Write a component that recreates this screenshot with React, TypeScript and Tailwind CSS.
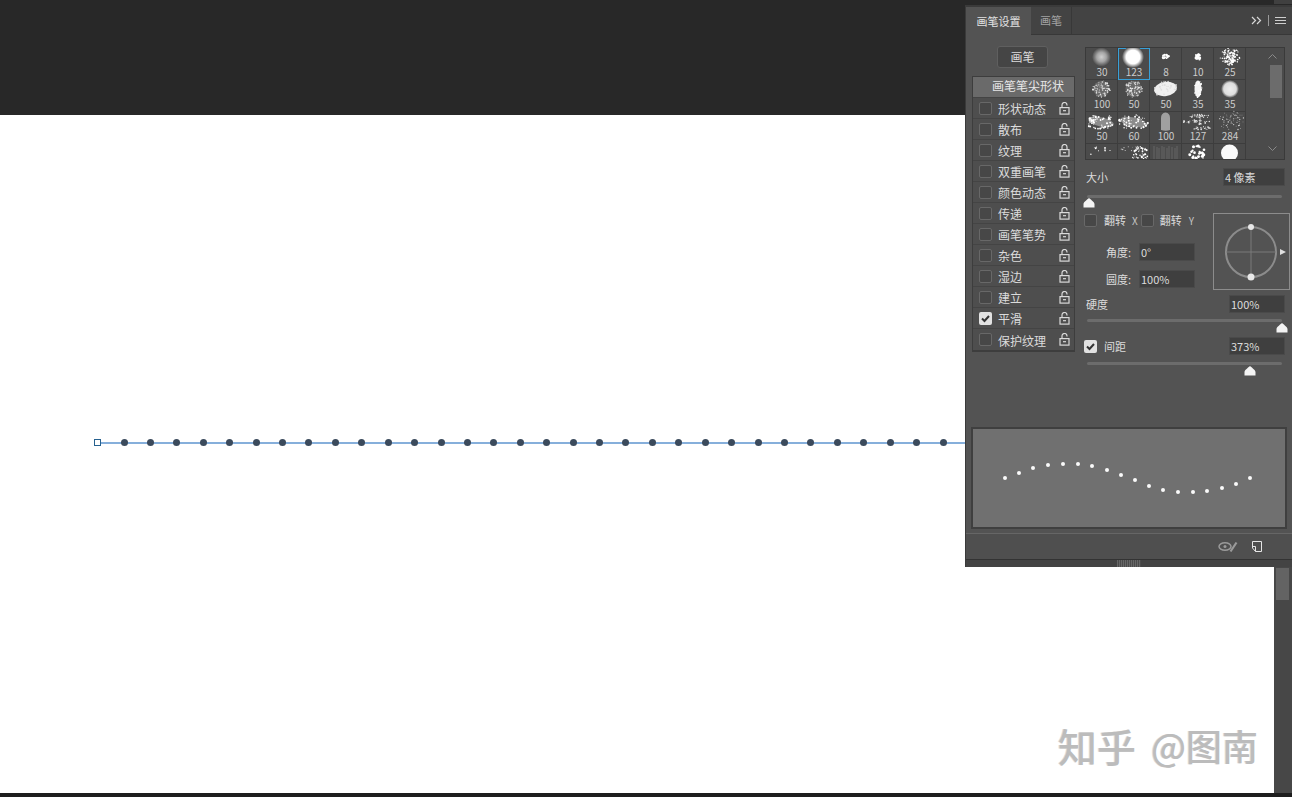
import React from 'react';

const rows = ['形状动态', '散布', '纹理', '双重画笔', '颜色动态', '传递', '画笔笔势', '杂色', '湿边', '建立', '平滑', '保护纹理'];

const strokeDots = [
  [1005, 478], [1019, 473], [1033, 468], [1048, 465], [1063, 464], [1078, 464], [1092, 466], [1107, 470], [1121, 475],
  [1135, 480], [1149, 486], [1163, 490], [1178, 492], [1193, 492], [1207, 491], [1222, 488], [1236, 484], [1250, 478],
];

const lineDots = Array.from({ length: 32 }, (_, i) => 27 + i * 26.42);

const rand = (seed: number) => {
  let s = seed;
  return () => {
    s = (s * 9301 + 49297) % 233280;
    return s / 233280;
  };
};

// rough speckled patch for the brush tips
const Speckle = ({ seed, cx, cy, rx, ry, n, r, fill = '#fff' }: { seed: number; cx: number; cy: number; rx: number; ry: number; n: number; r: number; fill?: string }) => {
  const next = rand(seed);
  const dots = Array.from({ length: n }, () => {
    const a = next() * Math.PI * 2;
    const d = Math.sqrt(next());
    return { x: cx + Math.cos(a) * d * rx, y: cy + Math.sin(a) * d * ry, s: r * (0.5 + next() * 0.7) };
  });
  return (
    <g fill={fill}>
      {dots.map((p, i) => (
        <circle key={i} cx={p.x.toFixed(1)} cy={p.y.toFixed(1)} r={p.s.toFixed(2)} />
      ))}
    </g>
  );
};

const Cloud = ({ seed }: { seed: number }) => (
  <>
    <ellipse cx="15" cy="11" rx="13" ry="4.500" fill="#8c8c8c" transform="rotate(12 15 11)" />
    <Speckle seed={seed} cx={15} cy={11} rx={15} ry={7.500} n={55} r={0.95} />
  </>
);

const Streaks = () => (
  <>
    <Speckle seed={71} cx={18} cy={5} rx={11} ry={2} n={26} r={0.8} fill="#ddd" />
    <Speckle seed={33} cx={14} cy={11} rx={14} ry={2.200} n={30} r={0.8} fill="#eee" />
    <Speckle seed={95} cx={20} cy={17} rx={10} ry={1.600} n={20} r={0.8} fill="#ddd" />
  </>
);

const Hatch = () => (
  <g stroke="#666" strokeWidth="1">
    {[4, 7, 9, 12, 14, 17, 19, 22, 25, 27].map((x, i) => (
      <path key={x} d={`M${x} ${3 + (i % 3)}v16`} />
    ))}
  </g>
);

const Dense = ({ seed }: { seed: number }) => (
  <>
    <circle cx="15.500" cy="10" r="8" fill="#6a6a6a" />
    <Speckle seed={seed} cx={15.500} cy={10} rx={9} ry={8.500} n={75} r={0.72} fill="#e6e6e6" />
  </>
);

type Tip = { label?: string; art: React.ReactNode; selected?: boolean };

const tips: Tip[] = [
  { label: '30', art: <circle cx="15.500" cy="10" r="9.500" fill="url(#softGray)" /> },
  { label: '123', selected: true, art: <circle cx="15" cy="10" r="11" fill="url(#softWhite)" /> },
  { label: '8', art: <Speckle seed={5} cx={16} cy={10} rx={3.500} ry={2.500} n={16} r={1.100} /> },
  { label: '10', art: <Speckle seed={9} cx={16} cy={10} rx={3} ry={3} n={24} r={1.300} /> },
  { label: '25', art: <><Speckle seed={17} cx={16} cy={9} rx={10} ry={9} n={70} r={0.8} /><Speckle seed={19} cx={17} cy={11} rx={5} ry={6} n={34} r={1} /></> },
  { label: '100', art: <Dense seed={21} /> },
  { label: '50', art: <Dense seed={29} /> },
  { label: '50', art: <><ellipse cx="15.500" cy="10" rx="11.500" ry="7" fill="#f0f0f0" transform="rotate(-8 15.500 10)" /><Speckle seed={37} cx={15.500} cy={10} rx={12.500} ry={8} n={30} r={0.8} fill="#ddd" /></> },
  { label: '35', art: <><ellipse cx="16" cy="10" rx="3.500" ry="8.500" fill="#f4f4f4" /><Speckle seed={39} cx={16} cy={10} rx={4.200} ry={9} n={22} r={0.7} /></> },
  { label: '35', art: <circle cx="16" cy="10" r="9" fill="url(#softBlob)" /> },
  { label: '50', art: <Cloud seed={41} /> },
  { label: '60', art: <Cloud seed={47} /> },
  { label: '100', art: <path d="M11 19V7q0-5 4.500-5.500Q20 2 20 7v12q-4 1.500-9 0z" fill="#a0a0a0" /> },
  { label: '127', art: <Streaks /> },
  { label: '284', art: <Speckle seed={53} cx={18} cy={10} rx={13} ry={10} n={60} r={0.55} fill="#ddd" /> },
  { art: <Speckle seed={61} cx={14} cy={9} rx={11} ry={7} n={9} r={0.8} /> },
  { art: <><Speckle seed={67} cx={22} cy={11} rx={8} ry={8} n={50} r={0.85} /><Speckle seed={73} cx={12} cy={5} rx={10} ry={3} n={14} r={0.6} fill="#ccc" /></> },
  { art: <Hatch /> },
  { art: <Speckle seed={83} cx={15} cy={10} rx={8.500} ry={8} n={26} r={1.500} /> },
  { art: <circle cx="15.500" cy="10" r="8.500" fill="#fafafa" /> },
];

const Gradients = () => (
  <svg width="0" height="0" className="absolute">
    <defs>
      <radialGradient id="softGray">
        <stop offset="0" stopColor="#cfcfcf" />
        <stop offset="0.5" stopColor="#a5a5a5" />
        <stop offset="1" stopColor="#4b4b4b" />
      </radialGradient>
      <radialGradient id="softWhite">
        <stop offset="0" stopColor="#fff" />
        <stop offset="0.62" stopColor="#fff" />
        <stop offset="1" stopColor="#4b4b4b" />
      </radialGradient>
      <radialGradient id="softBlob">
        <stop offset="0" stopColor="#eee" />
        <stop offset="0.7" stopColor="#dedede" />
        <stop offset="1" stopColor="#4b4b4b" />
      </radialGradient>
    </defs>
  </svg>
);

const Lock = ({ closed = false }: { closed?: boolean }) => (
  <svg width="11" height="13" viewBox="0 0 11 13" fill="none" stroke="#dadada" strokeWidth="1.200">
    <rect x="1" y="5.600" width="9" height="6.500" />
    <path d={closed ? 'M3 5.500V3a2.500 2.500 0 0 1 5 0v2.500' : 'M3 5.500V3a2.500 2.500 0 0 1 5 0v.5'} />
    <path d="M4 8.700h3" />
  </svg>
);

const Check = ({ on = false }: { on?: boolean }) =>
  on ? (
    <span className="block w-[13px] h-[13px] rounded-[2px] bg-[#e2e2e2] shrink-0">
      <svg className="ml-[2px] mt-[3px]" width="9" height="8" viewBox="0 0 9 8" fill="none" stroke="#333" strokeWidth="2">
        <path d="M1 3.500L3.500 6 8 1" />
      </svg>
    </span>
  ) : (
    <span className="block w-[13px] h-[13px] rounded-[2px] bg-[#474747] border border-[#686868] shrink-0" />
  );

const Field = ({ value, className }: { value: string; className: string }) => (
  <div className={`h-[18px] bg-[#3f3f3f] border border-[#4a4a4a] flex items-center pl-[1px] text-[11px] text-[#dcdcdc] ${className}`}>{value}</div>
);

const Slider = ({ at, track, thumb }: { at: number; track: string; thumb: string }) => (
  <div className={`relative h-[22px] ${track}`}>
    <div className="ml-[2px] h-[3px] w-[195px] bg-[#6c6c6c] rounded-full" />
    <svg className={`absolute ${thumb}`} style={{ left: at - 6 }} width="12" height="10" viewBox="0 0 12 10">
      <path d="M6 0C7 1 11.500 4 11.500 6V9.500H.5V6C.5 4 5 1 6 0Z" fill="#f4f4f4" />
    </svg>
  </div>
);

const App = () => {
  return (
    <div className="relative h-[797px] w-full flex flex-col overflow-hidden bg-[#282828] [font-family:'Noto_Sans_CJK_SC',sans-serif]">
      <Gradients />
      <div className="h-[115px] shrink-0 bg-[#282828] flex justify-end">
        <div className="w-[18px] h-[4px] bg-[#404040]" />
      </div>

      <div className="flex-1 flex min-h-0">
        {/* document canvas */}
        <div className="relative flex-1 bg-white">
          <div className="absolute left-[97px] top-[327px] w-[870px] h-[2px] bg-[#86afdb]" />
          {lineDots.map((x) => (
            <div key={x} className="absolute top-[324px] w-[7px] h-[7px] rounded-full bg-[#3b4a5c] [filter:blur(0.5px)]" style={{ left: 97 + x - 3.5 }} />
          ))}
          <div className="absolute left-[94px] top-[324px] w-[7px] h-[7px] bg-white border border-[#27618f]" />
          <div className="absolute left-[1058px] top-[605px] flex items-center text-[39px] leading-[50px] font-medium text-[#bcbcbc] whitespace-nowrap [text-shadow:-1px_0_0_#dcdcdc]">
            <span>知乎</span>
            <span className="ml-[15px] text-[36px]">@图南</span>
          </div>
        </div>
        {/* right scrollbar */}
        <div className="w-[18px] shrink-0 bg-[#474747] relative">
          <div className="absolute left-[2px] top-[453px] w-[13px] h-[32px] bg-[#636363]" />
        </div>
      </div>
      <div className="h-[4px] shrink-0 bg-[#1e1e1e]" />

      {/* floating brush settings panel */}
      <div className="absolute left-[965px] top-[5px] w-[327px] h-[562px] bg-[#535353] border-l border-[#3a3a3a] flex flex-col text-[12px] text-[#dcdcdc]">
        <div className="h-[30px] shrink-0 flex items-end bg-[#434343] border-t-2 border-[#3a3a3a] border-b border-b-[#383838]">
          <div className="w-[65px] h-[28px] -mb-px bg-[#535353] flex items-center justify-center text-[11px] text-[#e2e2e2]">画笔设置</div>
          <div className="w-[41px] h-full border-r border-[#383838] flex items-center justify-center text-[11px] text-[#a2a2a2]">画笔</div>
          <div className="ml-auto mr-[6px] h-full flex items-center gap-[6px] text-[#d0d0d0]">
            <svg width="11" height="9" viewBox="0 0 11 9" fill="none" stroke="#d8d8d8" strokeWidth="1.200">
              <path d="M1 1l3.500 3.500L1 8M6 1l3.500 3.500L6 8" />
            </svg>
            <div className="w-px h-[11px] bg-[#9a9a9a]" />
            <svg width="11" height="8" viewBox="0 0 11 8" stroke="#cfcfcf" strokeWidth="1">
              <path d="M0 .5h11M0 3.500h11M0 6.500h11" />
            </svg>
          </div>
        </div>

        <div className="h-[392px] shrink-0 flex">
          <div className="w-[119px] shrink-0 pl-[6px]">
            <div className="ml-[25px] mt-[11px] w-[51px] h-[22px] rounded-[3px] bg-[#454545] border border-[#5f5f5f] flex items-center justify-center">画笔</div>
            <div className="mt-[8px] w-[103px] h-[276px] bg-[#4e4e4e] border border-[#3d3d3d] border-b-2">
              <div className="h-[21px] bg-[#6a6a6a] border-b border-[#444] pl-[19px] pb-[3px] flex items-center text-[#e6e6e6]">画笔笔尖形状</div>
              {rows.map((name) => (
                <div key={name} className="h-[21px] border-b border-[#444] last:border-b-0 flex items-center pl-[6px] pr-[4px]">
                  <Check on={name === '平滑'} />
                  <span className="ml-[6px] pt-[2px] flex-1 whitespace-nowrap">{name}</span>
                  <Lock closed={name === '纹理'} />
                </div>
              ))}
            </div>
          </div>

          <div className="flex-1 pr-[7px] min-w-0 text-[11px]">
            {/* brush tip presets */}
            <div className="mt-[12px] h-[113px] bg-[#4b4b4b] border border-[#3a3a3a] flex">
              <div className="w-[160px] grid grid-cols-5 auto-rows-[32px] overflow-hidden">
                {tips.map((t, i) => (
                  <div key={i} className={`relative h-[32px] w-[32px] border-r border-b flex flex-col items-center ${t.selected ? 'border-[#38a0d8] outline outline-[#38a0d8] -outline-offset-1' : 'border-[#3d3d3d]'}`}>
                    <svg width="31" height="19" viewBox="0 1 31 19" className="shrink-0 overflow-visible [filter:blur(0.3px)]">{t.art}</svg>
                    {t.label && <span className="pl-px text-[10px] leading-[10px] text-[#cccccc]">{t.label}</span>}
                  </div>
                ))}
              </div>
              <div className="flex-1 relative">
                <svg className="absolute left-[22px] top-[6px]" width="9" height="5" viewBox="0 0 9 5" fill="none" stroke="#8a8a8a">
                  <path d="M.5 4.500l4-4 4 4" />
                </svg>
                <div className="absolute left-[24px] top-[17px] w-[12px] h-[33px] bg-[#6c6c6c]" />
                <svg className="absolute left-[22px] bottom-[8px]" width="9" height="5" viewBox="0 0 9 5" fill="none" stroke="#8a8a8a">
                  <path d="M.5.5l4 4 4-4" />
                </svg>
              </div>
            </div>

            <div className="mt-[8px] h-[18px] flex items-center justify-between">
              <span className="ml-[1px]">大小</span>
              <Field value="4 像素" className="w-[62px]" />
            </div>
            <Slider at={4} track="pt-[9px]" thumb="top-[12px]" />

            <div className="mt-[5px] h-[77px] flex -mr-[5px]">
              <div className="w-[128px] shrink-0">
                <div className="mt-px h-[13px] flex items-center -ml-[1px]">
                  <Check />
                  <span className="ml-[7px]">翻转</span>
                  <span className="ml-[6px] text-[10px] text-[#c4c4c4]">X</span>
                  <span className="ml-[3px]"><Check /></span>
                  <span className="ml-[6px]">翻转</span>
                  <span className="ml-[7px] text-[10px] text-[#c4c4c4]">Y</span>
                </div>
                <div className="mt-[16px] flex items-center">
                  <span className="ml-[21px] w-[33px]">角度:</span>
                  <Field value="0°" className="w-[56px]" />
                </div>
                <div className="mt-[9px] flex items-center">
                  <span className="ml-[21px] w-[33px]">圆度:</span>
                  <Field value="100%" className="w-[56px]" />
                </div>
              </div>
              <div className="w-[77px] h-[77px] border border-[#8c8c8c]">
                <svg width="75" height="75" viewBox="0 0 75 75">
                  <circle cx="37" cy="38" r="25" fill="none" stroke="#8c8c8c" strokeWidth="2" />
                  <path d="M37 13v50M12 38h50" stroke="#7a7a7a" strokeWidth="1" />
                  <circle cx="37" cy="13" r="3" fill="#e8e8e8" />
                  <circle cx="37" cy="63" r="3.500" fill="#e8e8e8" />
                  <path d="M66 35l6 3-6 3z" fill="#e0e0e0" />
                </svg>
              </div>
            </div>

            <div className="mt-[5px] h-[18px] flex items-center justify-between">
              <span className="ml-[1px]">硬度</span>
              <Field value="100%" className="w-[56px]" />
            </div>
            <Slider at={197} track="pt-[6px]" thumb="top-[10px]" />

            <div className="mt-[2px] h-[18px] flex items-center -ml-[1px]">
              <Check on />
              <span className="ml-[7px]">间距</span>
              <Field value="373%" className="w-[56px] ml-auto" />
            </div>
            <Slider at={165} track="pt-[7px]" thumb="top-[11px]" />
          </div>
        </div>

        {/* stroke preview */}
        <div className="ml-[5px] w-[316px] h-[102px] shrink-0 bg-[#707070] border-2 border-[#3f3f3f]">
          <svg width="312" height="98" viewBox="973 429 312 98" className="[filter:blur(0.4px)]">
            {strokeDots.map(([x, y]) => (
              <circle key={x} cx={x} cy={y} r="2" fill="#fafafa" />
            ))}
          </svg>
        </div>

        <div className="mt-[4px] h-[26px] shrink-0 border-t border-[#666] flex items-center justify-end pr-[30px] gap-[14px] bg-[#4f4f4f]">
          <svg width="20" height="12" viewBox="0 0 20 12" fill="none">
            <ellipse cx="7" cy="5.500" rx="6" ry="3.800" stroke="#9a9a9a" strokeWidth="1.500" />
            <circle cx="7" cy="5.500" r="1.500" fill="#9a9a9a" />
            <path d="M18.500 1.500L12.500 10.500" stroke="#9a9a9a" strokeWidth="2.200" />
          </svg>
          <svg width="10" height="11" viewBox="0 0 10 11" fill="none" stroke="#e6e6e6" strokeWidth="1">
            <path d="M.5.5h9v10H3.500L.5 7zM.5 5.500h3V10.500" />
          </svg>
        </div>

        <div className="flex-1 bg-[#434343] border-t border-[#333] flex justify-center">
          <div className="ml-[-1px] w-[24px] h-full bg-[#4b4b4b] bg-[repeating-linear-gradient(90deg,#666_0,#666_1px,#4b4b4b_1px,#4b4b4b_2px)]" />
        </div>
      </div>
    </div>
  );
};

export default App;
